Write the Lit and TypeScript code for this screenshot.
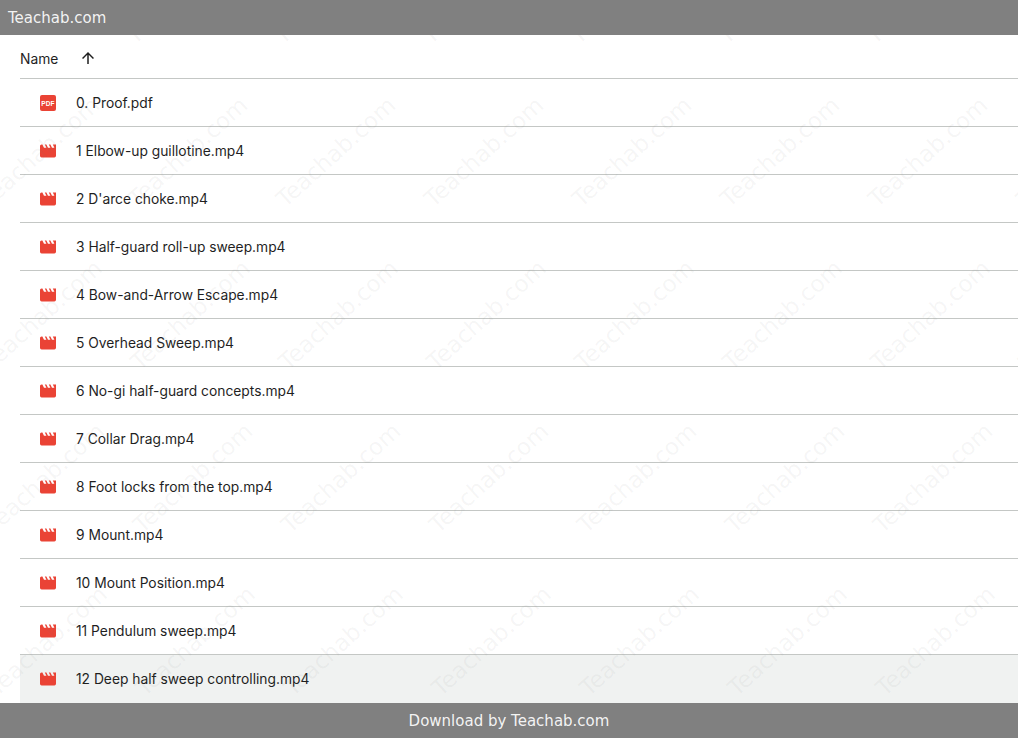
import { LitElement, html, css, svg } from "lit";
import { customElement } from "lit/decorators.js";

const FILES = [
  "0. Proof.pdf",
  "1 Elbow-up guillotine.mp4",
  "2 D'arce choke.mp4",
  "3 Half-guard roll-up sweep.mp4",
  "4 Bow-and-Arrow Escape.mp4",
  "5 Overhead Sweep.mp4",
  "6 No-gi half-guard concepts.mp4",
  "7 Collar Drag.mp4",
  "8 Foot locks from the top.mp4",
  "9 Mount.mp4",
  "10 Mount Position.mp4",
  "11 Pendulum sweep.mp4",
  "12 Deep half sweep controlling.mp4",
];

const pdfIcon = svg`<svg class="icon" viewBox="0 0 16 16"><rect width="16" height="16" rx="2" fill="#ea4335"/><text x="8" y="10.6" text-anchor="middle" class="pdf">PDF</text></svg>`;
const movieIcon = svg`<svg class="icon" viewBox="2 2 20 20"><path fill="#ea4335" d="M18 4l2 4h-3l-2-4h-2l2 4h-3l-2-4H8l2 4H7L5 4H4c-1.1 0-1.99.9-1.99 2L2 18c0 1.1.9 2 2 2h16c1.1 0 2-.9 2-2V4h-4z"/></svg>`;

@customElement("app-root")
export class AppRoot extends LitElement {
  static styles = css`
    :host {
      display: flex;
      flex-direction: column;
      width: 1018px;
      height: 738px;
      overflow: hidden;
      background: #fff;
      font-family: Inter, Roboto, sans-serif;
      color: #1f1f1f;
    }
    .bar {
      flex: none;
      height: 35px;
      box-sizing: border-box;
      padding-top: 1px;
      background: #808080;
      color: rgba(255, 255, 255, 0.92);
      font: 15px/35px "DejaVu Sans", sans-serif;
      position: relative;
      z-index: 1;
    }
    .top { padding-left: 8px; }
    .bottom { text-align: center; }
    main {
      flex: 1;
      position: relative;
      overflow: hidden;
      padding-left: 20px;
    }
    .head {
      height: 44px;
      box-sizing: border-box;
      display: flex;
      align-items: center;
      padding-top: 4px;
      font-size: 13.8px;
      border-bottom: 1px solid #c4c7c5;
    }
    .head svg { width: 18px; height: 18px; margin-left: 21px; margin-top: -1px; fill: #1f1f1f; }
    .row {
      height: 48px;
      box-sizing: border-box;
      display: flex;
      align-items: center;
      padding-left: 20px;
      font-size: 13.8px;
      border-bottom: 1px solid #c4c7c5;
    }
    .row.sel { background: #f0f2f1; border-bottom: 0; }
    .icon { width: 16px; height: 16px; margin-right: 20px; flex: none; }
    .pdf { font: 700 6.5px "Liberation Sans", sans-serif; fill: #fff; letter-spacing: 0.2px; }
    .marks { position: absolute; inset: 0; pointer-events: none; }
    .mark {
      position: absolute;
      left: 0;
      top: 0;
      transform-origin: 100% 100%;
      white-space: nowrap;
      font: 23px "DejaVu Sans", sans-serif;
      color: rgba(120, 120, 120, 0.07);
    }
  `;

  private marks() {
    const out = [];
    for (let r = 0; r < 6; r++) {
      for (let c = 0; c < 8; c++) {
        const x = 102 + c * 148 + r * 2.5;
        const y = -52 + r * 163 - 35;
        out.push(html`<span class="mark" style="transform: translate(calc(${x}px - 100%), calc(${y}px - 100%)) rotate(-42deg)">Teachab.com</span>`);
      }
    }
    return out;
  }

  render() {
    return html`
      <div class="bar top">Teachab.com</div>
      <main>
        <div class="head">Name
          <svg viewBox="0 0 24 24"><path d="M4 12l1.41 1.41L11 7.83V20h2V7.83l5.58 5.59L20 12l-8-8-8 8z"/></svg>
        </div>
        ${FILES.map(
          (f, i) => html`<div class="row ${i === FILES.length - 1 ? "sel" : ""}">${f.endsWith(".pdf") ? pdfIcon : movieIcon}<span>${f}</span></div>`
        )}
        <div class="marks">${this.marks()}</div>
      </main>
      <div class="bar bottom">Download by Teachab.com</div>
    `;
  }
}
